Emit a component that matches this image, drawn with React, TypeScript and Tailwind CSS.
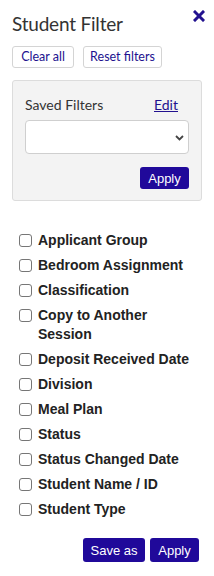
const fields = [
  'Applicant Group',
  'Bedroom Assignment',
  'Classification',
  'Copy to Another Session',
  'Deposit Received Date',
  'Division',
  'Meal Plan',
  'Status',
  'Status Changed Date',
  'Student Name / ID',
  'Student Type',
]

export default function App() {
  return (
    <div className="h-[576px] w-[214px] bg-white px-3 pt-2 font-['Lato',sans-serif] text-[#333]">
      <div className="flex items-start justify-between">
        <h1 className="mt-[3px] text-[19px] font-normal leading-[26px] tracking-[-0.2px] text-[#333]">Student Filter</h1>
        <svg className="mr-[-3px] mt-[2px] h-[12px] w-[12px]" viewBox="0 0 12 12">
          <path d="M2 2 L10 10 M10 2 L2 10" stroke="#22118f" strokeWidth="3" strokeLinecap="square" />
        </svg>
      </div>

      <div className="mt-[9px] flex gap-[9px]">
        <button className="h-[22px] w-[62px] rounded-[3px] border border-[#d4d4d4] bg-white text-[12.5px] leading-none text-[#22118f]">
          Clear all
        </button>
        <button className="h-[22px] w-[79px] rounded-[3px] border border-[#d4d4d4] bg-white text-[12.5px] leading-none text-[#22118f]">
          Reset filters
        </button>
      </div>

      <div className="mt-[12px] w-[190px] rounded-[3px] border border-[#dcdcdc] bg-[#f3f3f3] px-[12px] pb-[11px] pt-[15px]">
        <div className="flex items-end justify-between">
          <span className="text-[14px] leading-[18px] text-[#333]">Saved Filters</span>
          <a href="#" className="mr-[11px] text-[14px] leading-[18px] text-[#22118f] underline">
            Edit
          </a>
        </div>
        <div className="relative mt-[6px] h-[34px] rounded-[4px] border border-[#cfcfcf] bg-white">
          <svg className="absolute right-[4px] top-[14px] h-[6px] w-[9px]" viewBox="0 0 9 6">
            <path d="M1 1 L4.5 4.5 L8 1" stroke="#444" strokeWidth="1.8" fill="none" />
          </svg>
        </div>
        <div className="mt-[13px] flex justify-end">
          <button className="h-[22px] w-[49px] rounded-[3px] bg-[#20099a] font-['Liberation_Sans',sans-serif] text-[13px] leading-none text-white">
            Apply
          </button>
        </div>
      </div>

      <ul className="mt-[30px] flex w-[190px] flex-col gap-[6px] pl-[7px] font-['Liberation_Sans',Arial,sans-serif]">
        {fields.map((f) => (
          <li key={f} className="flex items-start gap-[6px]">
            <span className="mt-[3px] h-[13px] w-[13px] shrink-0 rounded-[3px] border border-[#767676] bg-white" />
            <span className="text-[14px] font-bold leading-[19px] text-[#222]">{f}</span>
          </li>
        ))}
      </ul>

      <div className="mt-[19px] flex justify-end gap-[5px] pr-[3px] font-['Liberation_Sans',Arial,sans-serif]">
        <button className="h-[24px] w-[62px] rounded-[3px] bg-[#20099a] text-[13px] leading-none text-white">
          Save as
        </button>
        <button className="h-[24px] w-[49px] rounded-[3px] bg-[#20099a] text-[13px] leading-none text-white">
          Apply
        </button>
      </div>
    </div>
  )
}
